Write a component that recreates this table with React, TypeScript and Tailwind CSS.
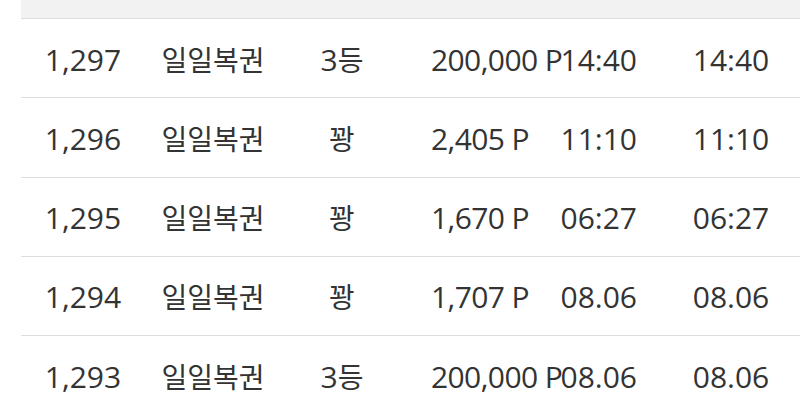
const rows = [
  { no: "1,297", name: "일일복권", rank: "3등", point: "200,000 P", time: "14:40", date: "14:40" },
  { no: "1,296", name: "일일복권", rank: "꽝", point: "2,405 P", time: "11:10", date: "11:10" },
  { no: "1,295", name: "일일복권", rank: "꽝", point: "1,670 P", time: "06:27", date: "06:27" },
  { no: "1,294", name: "일일복권", rank: "꽝", point: "1,707 P", time: "08.06", date: "08.06" },
  { no: "1,293", name: "일일복권", rank: "3등", point: "200,000 P", time: "08.06", date: "08.06" },
];

function Kr({ children }: { children: string }) {
  return <span className="text-[28px]">{children}</span>;
}

export default function App() {
  return (
    <div
      className="h-[411px] w-[800px] overflow-hidden bg-white text-[30px] text-[#333333]"
      style={{ fontFamily: '"Open Sans", "Noto Sans CJK KR", sans-serif' }}
    >
      <div className="ml-[21px]">
        <div className="h-[19px] border-b border-[#dedede] bg-[#f2f2f2]" />
        {rows.map((row) => (
          <div
            key={row.no}
            className="flex h-[79.25px] items-center whitespace-nowrap border-b border-[#dedede] pt-[3px] leading-none"
          >
            <div className="w-[124px] shrink-0 text-center">{row.no}</div>
            <div className="w-[136px] shrink-0 text-center">
              <Kr>{row.name}</Kr>
            </div>
            <div className="w-[122px] shrink-0 text-center">
              {row.rank === "꽝" ? <Kr>꽝</Kr> : <>3<Kr>등</Kr></>}
            </div>
            <div className="ml-[28px] w-[129px] shrink-0 text-left tracking-[-0.6px]">
              {row.point}
            </div>
            <div className="w-[77px] shrink-0 text-right">{row.time}</div>
            <div className="ml-[26px] w-[136px] shrink-0 text-center">{row.date}</div>
          </div>
        ))}
      </div>
    </div>
  );
}
